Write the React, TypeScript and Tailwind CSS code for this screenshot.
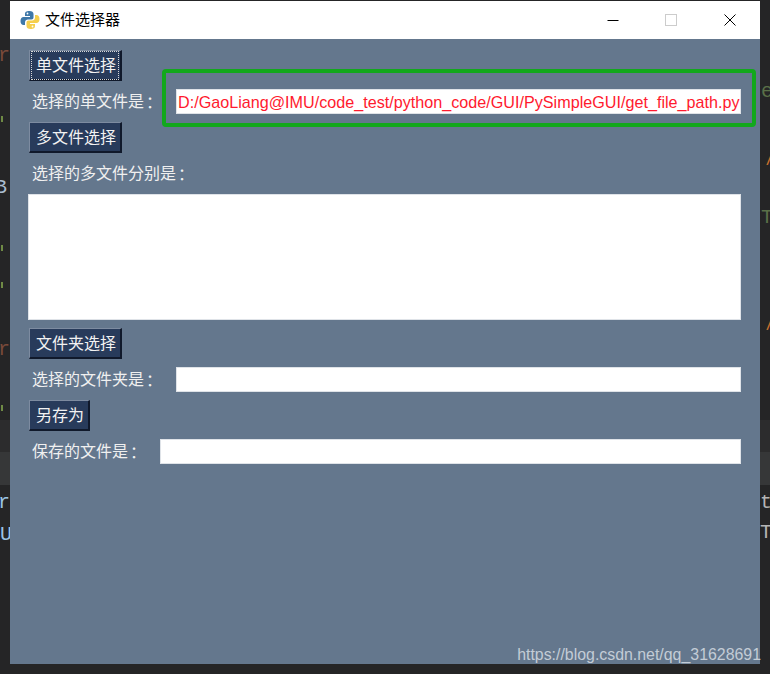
import React from 'react';

const sans = 'font-["Liberation_Sans","Noto_Sans_CJK_SC",sans-serif]';

function PyLogo() {
  return (
    <svg width="20" height="20" viewBox="0 0 20 20">
      <path d="M9.500 1C6 1 5 2.300 5 4v2h5v1H3.500C1.800 7 .5 8.300.5 11c0 2.700 1.300 4 3 4H5v-2.500C5 10.800 6.300 9.500 8 9.500h3.500c1.200 0 2-.8 2-2V4c0-1.700-1.500-3-4-3z" fill="#3f78a8" />
      <path d="M10.500 19c3.500 0 4.500-1.300 4.500-3v-2h-5v-1h6.500c1.700 0 3-1.300 3-4 0-2.700-1.300-4-3-4H15v2.500c0 1.700-1.300 3-3 3H8.500c-1.200 0-2 .8-2 2V16c0 1.700 1.500 3 4 3z" fill="#f5cf4d" />
      <circle cx="7.500" cy="3.500" r="0.900" fill="#fff" />
      <circle cx="12.500" cy="16.500" r="0.900" fill="#fff" />
    </svg>
  );
}

function Btn({ label, focused }: { label: string; focused?: boolean }) {
  return (
    <button className="self-start h-[31px] px-[2px] bg-[#283b5b] text-[#f2f2f2] text-[16px] leading-none border border-t-[#7d8ba0] border-l-[#7d8ba0] border-r-[#10192b] border-b-[#10192b] border-b-2 border-r-2">
      <span className={focused ? 'flex items-center h-[27px] pt-[2px] pl-[4px] pr-[2px] outline-1 outline-dotted outline-[#d8d8d8]' : 'flex items-center h-[27px] pt-[2px] pl-[4px] pr-[2px]'}>
        {label}
      </span>
    </button>
  );
}

// the colon sits centred in its cell in the reference, as in the TC face
function Label({ text, className }: { text: string; className?: string }) {
  return (
    <div className={`flex items-center shrink-0 h-[25px] pl-[3px] text-[16px] text-[#f0f0f0] ${className}`}>
      <span>{text}</span>
      <span className='-ml-[2px] font-["Noto_Sans_CJK_TC",sans-serif]'>：</span>
    </div>
  );
}

function Field({ value }: { value?: string }) {
  return (
    <div className="flex-1 min-w-0 h-[25px] bg-white border border-[#dfe3e8] pl-[1px] text-[16.17px] leading-[24px] text-[#ff1a2e] whitespace-nowrap overflow-hidden">
      {value}
    </div>
  );
}

export default function App() {
  return (
    <div className={`relative flex w-[770px] h-[674px] bg-[#252526] overflow-hidden ${sans}`}>
      {/* editor behind the window */}
      <div className="relative w-[10px] shrink-0 overflow-hidden text-[20px] leading-[24px] font-['Liberation_Mono',monospace]">
        <div className="absolute left-0 top-[420px] w-full h-[32px] bg-[#2c2c2d]" />
        <div className="absolute left-0 top-[452px] w-full h-[33px] bg-[#363738]" />
        <span className="absolute left-[-2px] top-[44px] text-[#7a4a3a]">r</span>
        <div className="absolute left-[1px] top-[116px] w-[2px] h-[6px] bg-[#6f8a45]" />
        <span className="absolute left-[-5px] top-[176px] text-[#a9bcd0]">B</span>
        <div className="absolute left-[1px] top-[245px] w-[2px] h-[6px] bg-[#6f8a45]" />
        <div className="absolute left-[1px] top-[282px] w-[2px] h-[6px] bg-[#6f8a45]" />
        <span className="absolute left-[-2px] top-[338px] text-[#7a4a3a]">r</span>
        <div className="absolute left-[1px] top-[405px] w-[2px] h-[6px] bg-[#6f8a45]" />
        <span className="absolute left-[-2px] top-[491px] text-[#9cc4e4]">r</span>
        <span className="absolute left-0 top-[523px] text-[#9cc4e4]">U</span>
      </div>

      <div className="flex flex-col w-[750px] h-[663px] mt-[1px] shrink-0">
        <div className="flex items-center h-[38px] bg-white shrink-0">
          <div className="ml-[10px] mr-[5px]">
            <PyLogo />
          </div>
          <span className="text-[15px] text-black">文件选择器</span>
          <div className="ml-auto flex items-center">
            <svg width="14" height="14" viewBox="0 0 14 14" className="mr-[44px]">
              <path d="M1.500 7.500h11" stroke="#000" strokeWidth="1" />
            </svg>
            <svg width="14" height="14" viewBox="0 0 14 14" className="mr-[45px]">
              <rect x="1.500" y="1.500" width="11" height="11" fill="none" stroke="#cccccc" />
            </svg>
            <svg width="14" height="14" viewBox="0 0 14 14" className="mr-[23px]">
              <path d="M1.500 1.500l11 11M12.500 1.500l-11 11" stroke="#000" strokeWidth="1" />
            </svg>
          </div>
        </div>

        <div className="relative flex-1 flex flex-col gap-2 bg-[#64778d] pt-[11px] pl-[19px] pr-[19px]">
          <Btn label="单文件选择" focused />
          <div className="flex items-center">
            <Label text="选择的单文件是" className="w-[147px]" />
            <Field value="D:/GaoLiang@IMU/code_test/python_code/GUI/PySimpleGUI/get_file_path.py" />
          </div>
          <Btn label="多文件选择" />
          <Label text="选择的多文件分别是" />
          <div className="h-[126px] -ml-px bg-white border border-[#dfe3e8]" />
          <Btn label="文件夹选择" />
          <div className="flex items-center">
            <Label text="选择的文件夹是" className="w-[147px]" />
            <Field />
          </div>
          <Btn label="另存为" />
          <div className="flex items-center">
            <Label text="保存的文件是" className="w-[131px]" />
            <Field />
          </div>

          {/* annotation drawn over the screenshot */}
          <div className="absolute left-[152px] top-[30px] w-[594px] h-[58px] border-[4px] border-[#12a81c] rounded-[4px]" />
          <div className="absolute right-[-1px] bottom-0 text-[15.9px] leading-[18px] text-[#c3ccd6]">https://blog.csdn.net/qq_31628691</div>
        </div>
      </div>

      <div className="relative w-[10px] shrink-0 overflow-hidden text-[20px] leading-[24px] font-['Liberation_Mono',monospace]">
        <div className="absolute left-0 top-[420px] w-full h-[32px] bg-[#2c2c2d]" />
        <div className="absolute left-0 top-[452px] w-full h-[33px] bg-[#363738]" />
        <span className="absolute left-[1px] top-[80px] text-[#5a7048]">e</span>
        <span className="absolute left-[5px] top-[152px] text-[#c9722e]">^</span>
        <span className="absolute left-[1px] top-[206px] text-[#5a7048]">T</span>
        <span className="absolute left-[5px] top-[317px] text-[#c9722e]">^</span>
        <span className="absolute left-0 top-[491px] text-[#b5b5b5]">t</span>
        <span className="absolute left-0 top-[521px] text-[#b5b5b5]">T</span>
      </div>
    </div>
  );
}
